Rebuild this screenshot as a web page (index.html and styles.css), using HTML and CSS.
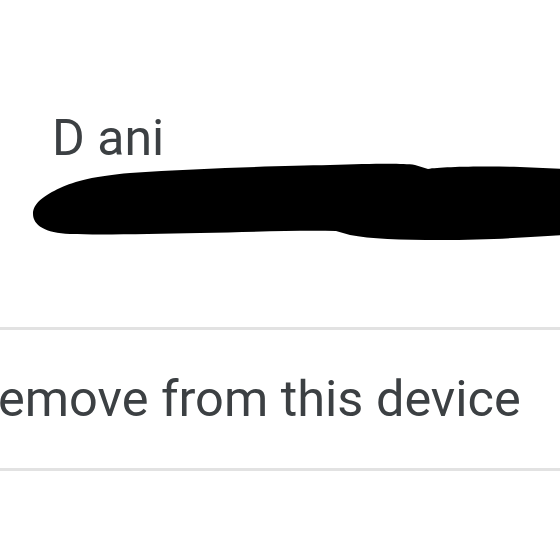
FILE: index.html
```html
<!DOCTYPE html>
<html lang="en">

<head>
    <meta charset="UTF-8">
    <meta name="viewport" content="width=device-width, initial-scale=1.0">
    <title>Account</title>
    <link rel="stylesheet" href="styles.css">
</head>

<body>

    <div class="account">
        <p class="account-name">D ani</p>
    </div>

    <!-- redacted email scribble -->
    <svg class="scribble" viewBox="0 163 560 82" preserveAspectRatio="none">
        <path d="M33,214 C33,203 45,195 60,188 C75,181 95,176 130,173 C200,168 280,166 330,165 C370,164 400,163 415,165 L428,169 C440,167 480,166 520,167 L565,169 L565,235 C530,237 490,240 440,240 C400,240 370,239 350,235 L336,231 C300,230 250,232 200,233 C150,234 100,235 70,234 C45,233 33,225 33,214 Z" fill="#000"/>
    </svg>

    <div class="menu">
        <div class="menu-item">emove from this device</div>
    </div>

</body>

</html>
```

FILE: styles.css
```css
/* Page */
body {
    margin: 0;
    font-family: Roboto, 'Noto Sans', sans-serif;
    color: #3c4043;
    background: #fff;
    overflow: hidden;
}

/* Account header */
.account {
    padding: 113px 0 0 52px;
}

.account-name {
    margin: 0;
    font-size: 50px;
    line-height: 50px;
}

.scribble {
    display: block;
    width: 560px;
    height: 82px;
}

/* Menu */
.menu {
    margin-top: 82px;
    border-top: 3px solid #e2e2e2;
    border-bottom: 3px solid #e2e2e2;
}

.menu-item {
    height: 138px;
    line-height: 138px;
    font-size: 50.5px;
    margin-left: -2px;
    white-space: nowrap;
}
```
